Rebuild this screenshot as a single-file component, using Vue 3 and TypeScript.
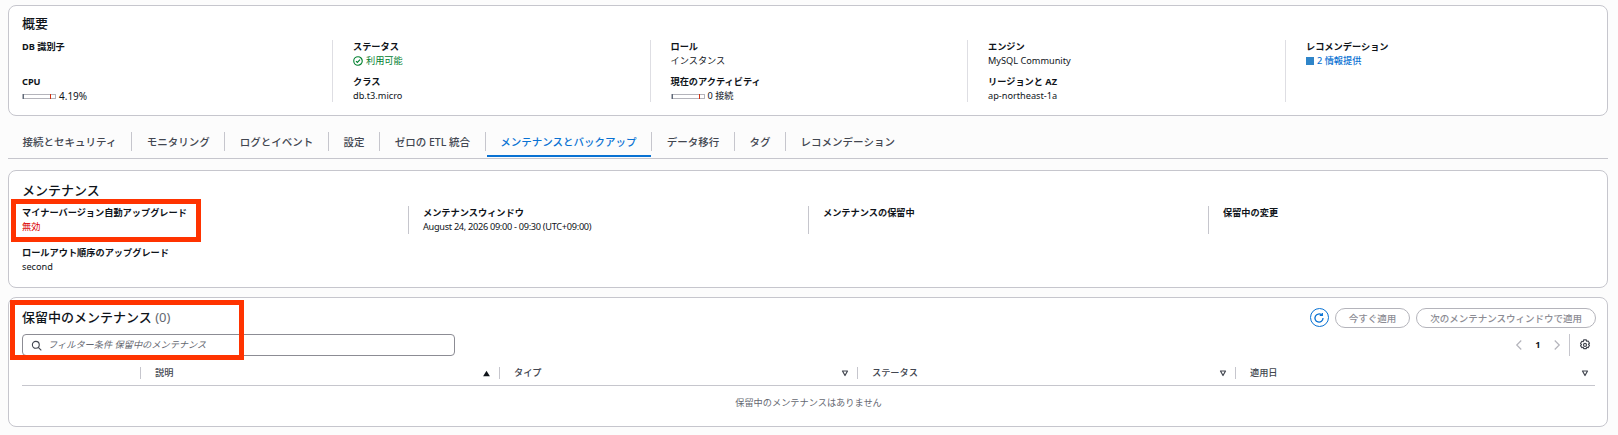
<script setup lang="ts">
interface Field { label: string; value?: string; kind?: string }
const overview: Field[][] = [
  [{ label: 'DB 識別子', value: '' }, { label: 'CPU', value: '4.19%', kind: 'bar-a' }],
  [{ label: 'ステータス', value: '利用可能', kind: 'ok' }, { label: 'クラス', value: 'db.t3.micro' }],
  [{ label: 'ロール', value: 'インスタンス' }, { label: '現在のアクティビティ', value: '0 接続', kind: 'bar-b' }],
  [{ label: 'エンジン', value: 'MySQL Community' }, { label: 'リージョンと AZ', value: 'ap-northeast-1a' }],
  [{ label: 'レコメンデーション', value: '2 情報提供', kind: 'info' }],
]
const tabs = ['接続とセキュリティ', 'モニタリング', 'ログとイベント', '設定', 'ゼロの ETL 統合', 'メンテナンスとバックアップ', 'データ移行', 'タグ', 'レコメンデーション']
const activeTab = 5
const columns = [
  { title: '説明', sort: 'asc' },
  { title: 'タイプ', sort: 'none' },
  { title: 'ステータス', sort: 'none' },
  { title: '適用日', sort: 'none' },
]
</script>

<template>
  <div class="page">
    <section class="card overview">
      <h2 class="card-title">概要</h2>
      <div class="ov-grid">
        <div v-for="(col, i) in overview" :key="i" class="ov-col">
          <div v-for="f in col" :key="f.label" class="field">
            <div class="label">{{ f.label }}</div>
            <div class="value" :class="f.kind">
              <svg v-if="f.kind === 'ok'" class="ok-icon" viewBox="0 0 16 16" width="10" height="10">
                <circle cx="8" cy="8" r="6.8" fill="none" stroke="#00802f" stroke-width="1.8" />
                <path d="M4.8 8.2l2.2 2.2 4.2-4.6" fill="none" stroke="#00802f" stroke-width="1.8" />
              </svg>
              <span v-if="f.kind === 'info'" class="info-square"></span>
              <span v-if="f.kind === 'bar-a' || f.kind === 'bar-b'" class="bar"></span>
              <span>{{ f.value }}</span>
            </div>
          </div>
        </div>
      </div>
    </section>

    <nav class="tabs">
      <div v-for="(t, i) in tabs" :key="t" class="tab" :class="{ active: i === activeTab }">
        <span class="tab-text">{{ t }}</span>
      </div>
    </nav>

    <section class="card maint">
      <h2 class="card-title">メンテナンス</h2>
      <div class="maint-grid">
        <div class="mcol">
          <div class="label">マイナーバージョン自動アップグレード</div>
          <div class="value danger">無効</div>
        </div>
        <div class="mcol">
          <div class="label">メンテナンスウィンドウ</div>
          <div class="value date">August 24, 2026 09:00 - 09:30 (UTC+09:00)</div>
        </div>
        <div class="mcol"><div class="label">メンテナンスの保留中</div></div>
        <div class="mcol"><div class="label">保留中の変更</div></div>
        <div class="mcol rollout">
          <div class="label">ロールアウト順序のアップグレード</div>
          <div class="value">second</div>
        </div>
      </div>
      <div class="mark mark-a"></div>
    </section>

    <section class="card pending">
      <div class="pending-head">
        <h2 class="card-title pending-title">保留中のメンテナンス <span class="count">(0)</span></h2>
        <div class="actions">
          <button class="refresh" type="button" aria-label="更新">
            <svg viewBox="0 0 16 16" width="12" height="12">
              <path d="M13.4 8a5.4 5.4 0 1 1-1.7-3.9" fill="none" stroke="#0972d3" stroke-width="1.7" />
              <path d="M12.4 1.2v3.4H9" fill="none" stroke="#0972d3" stroke-width="1.7" />
            </svg>
          </button>
          <button class="btn" type="button">今すぐ適用</button>
          <button class="btn" type="button">次のメンテナンスウィンドウで適用</button>
        </div>
      </div>
      <div class="toolbar">
        <div class="search">
          <svg viewBox="0 0 16 16" width="11" height="11">
            <circle cx="7" cy="7" r="5" fill="none" stroke="#424650" stroke-width="1.6" />
            <path d="M10.6 10.6L15 15" fill="none" stroke="#424650" stroke-width="1.6" />
          </svg>
          <span class="placeholder">フィルター条件 保留中のメンテナンス</span>
        </div>
        <div class="pager">
          <svg viewBox="0 0 16 16" width="12" height="12"><path d="M11 2L5 8l6 6" fill="none" stroke="#b4b4bb" stroke-width="1.6" /></svg>
          <span class="page-no">1</span>
          <svg viewBox="0 0 16 16" width="12" height="12"><path d="M5 2l6 6-6 6" fill="none" stroke="#b4b4bb" stroke-width="1.6" /></svg>
          <span class="pager-sep"></span>
          <svg class="gear" viewBox="0 0 16 16" width="12" height="12">
            <path d="M6.2 1.200h3.600l.5 1.900 1.900-.5 1.800 3.100-1.400 1.300 1.400 1.400-1.800 3.100-1.900-.5-.5 1.900H6.200l-.5-1.900-1.900.5L2 8.900l1.400-1.400L2 6.200l1.800-3.100 1.900.5z" fill="none" stroke="#424650" stroke-width="1.500" stroke-linejoin="round" />
            <circle cx="8" cy="7.900" r="2" fill="none" stroke="#424650" stroke-width="1.500" />
          </svg>
        </div>
      </div>
      <div class="thead">
        <div class="th select"></div>
        <div v-for="c in columns" :key="c.title" class="th">
          <span class="th-text">{{ c.title }}</span>
          <svg v-if="c.sort === 'asc'" class="caret" viewBox="0 0 16 16" width="9" height="9"><path d="M8 3l6 10H2z" fill="#0f141a" /></svg>
          <svg v-else class="caret" viewBox="0 0 16 16" width="8" height="8"><path d="M3 4h10l-5 9z" fill="none" stroke="#424650" stroke-width="2.400" stroke-linejoin="round" /></svg>
        </div>
      </div>
      <div class="empty">保留中のメンテナンスはありません</div>
      <div class="mark mark-b"></div>
    </section>
  </div>
</template>

<style>
html, body { margin: 0; background: #fcfcfc; }
</style>

<style scoped>
.page {
  width: 1600px;
  height: 435px;
  margin-left: 8px;
  padding-top: 5px;
  box-sizing: border-box;
  overflow: hidden;
  font-family: "Noto Sans", "Noto Sans CJK JP", sans-serif;
  font-size: 9.2px;
  line-height: 14px;
  color: #0f141a;
}
.card {
  position: relative;
  box-sizing: border-box;
  background: #fff;
  border: 1px solid #c6c6cd;
  border-radius: 8px;
  padding: 0 12px 0 13px;
}
.card-title {
  margin: 0;
  font-size: 13px;
  line-height: 18px;
  font-weight: 500;
}
.overview { height: 111px; padding-top: 8px; }
.ov-grid {
  display: grid;
  grid-template-columns: 310px 317.5px 317.5px 318px 1fr;
  margin-top: 8px;
}
.ov-col { height: 62px; box-sizing: border-box; }
.ov-col + .ov-col { border-left: 1px solid #dedee3; padding-left: 20px; }
.field { height: 35px; }
.label { font-weight: 700; white-space: nowrap; }
.value { display: flex; align-items: center; white-space: nowrap; color: #0f141a; min-height: 14px; }
.value.ok { color: #00802f; gap: 3px; }
.value.info { color: #0972d3; gap: 3px; font-weight: 500; }
.value.bar-a { font-size: 10px; }
.value.date { letter-spacing: -0.3px; }
.info-square { width: 8px; height: 8px; background: #2f85c9; }
.ok-icon { flex: none; }
.bar {
  position: relative;
  box-sizing: border-box;
  width: 34px;
  height: 5px;
  margin-right: 3px;
  border: 1px solid #b4b4bb;
  background: #fff;
}
.bar::before, .bar::after { content: ""; position: absolute; top: -1px; bottom: -1px; width: 1px; }
.bar::before { left: 0; background: #5f6b7a; }
.bar::after { left: 27px; background: #d13212; }

.tabs {
  display: flex;
  align-items: flex-start;
  height: 42px;
  border-bottom: 1px solid #c6c6cd;
  box-sizing: content-box;
}
.tab {
  position: relative;
  display: flex;
  align-items: center;
  height: 19px;
  margin-top: 16px;
  padding: 0 14.6px;
  font-size: 10.5px;
  font-weight: 500;
  color: #424650;
  white-space: nowrap;
}
.tab + .tab { border-left: 1px solid #c6c6cd; }
.tab.active { color: #0972d3; }
.tab.active::after {
  content: "";
  position: absolute;
  left: 1px;
  right: 0;
  bottom: -6px;
  height: 2px;
  background: #0972d3;
}

.maint { margin-top: 11px; height: 118px; padding-top: 10px; }
.maint-grid {
  display: grid;
  grid-template-columns: 386px 400px 400px 1fr;
  margin-top: 7px;
  row-gap: 12px;
}
.mcol { min-height: 28px; }
.mcol:nth-child(2), .mcol:nth-child(3), .mcol:nth-child(4) {
  border-left: 1px solid #c6c6cd;
  padding-left: 14px;
}
.rollout { grid-column: 1 / 2; }
.danger { color: #db0000; }

.pending { margin-top: 9px; height: 130px; padding-top: 1px; }
.pending-head {
  display: flex;
  justify-content: space-between;
  align-items: center;
  height: 35px;
}
.pending-title { margin-top: 0; }
.count { font-weight: 400; color: #656871; }
.actions { display: flex; align-items: center; gap: 6px; padding-top: 2px; margin-right: -1px; }
.refresh {
  display: flex;
  align-items: center;
  justify-content: center;
  width: 19px;
  height: 19px;
  padding: 0;
  border: 1px solid #0972d3;
  border-radius: 50%;
  background: #fff;
}
.btn {
  height: 20px;
  padding: 0 13px;
  border: 1px solid #b4b4bb;
  border-radius: 10px;
  background: #fff;
  color: #8c8c94;
  font-family: inherit;
  font-size: 9.5px;
  font-weight: 500;
}
.toolbar {
  display: flex;
  justify-content: space-between;
  align-items: center;
  height: 22px;
}
.search {
  display: flex;
  align-items: center;
  gap: 6px;
  box-sizing: border-box;
  width: 433px;
  height: 22px;
  padding-left: 8px;
  border: 1px solid #8c8c94;
  border-radius: 4px;
}
.placeholder { font-style: italic; color: #656871; }
.pager { display: flex; align-items: center; height: 22px; }
.page-no { width: 26px; text-align: center; font-weight: 700; }
.pager-sep { width: 1px; height: 22px; margin: 0 9px 0 6px; background: #c6c6cd; }
.gear { margin-right: 4px; }
.thead {
  display: grid;
  grid-template-columns: 118px 359px 358px 378px 1fr;
  margin-top: 11px;
  height: 18px;
  border-bottom: 1px solid #c6c6cd;
  box-sizing: content-box;
}
.th {
  display: flex;
  align-items: center;
  justify-content: space-between;
  height: 12px;
  padding: 0 8.5px 0 14px;
  font-weight: 500;
  color: #424650;
}
.th:last-child { padding-right: 6px; }
.th + .th { border-left: 1px solid #c6c6cd; }
.th.select { padding: 0; }
.empty {
  text-align: center;
  color: #656871;
  padding-top: 10px;
}

.mark {
  position: absolute;
  box-sizing: border-box;
  border: 5px solid #ff3300;
  pointer-events: none;
}
.mark-a { left: 2px; top: 28px; width: 190px; height: 43px; }
.mark-b { left: 1px; top: 2px; width: 234px; height: 60px; }
</style>
